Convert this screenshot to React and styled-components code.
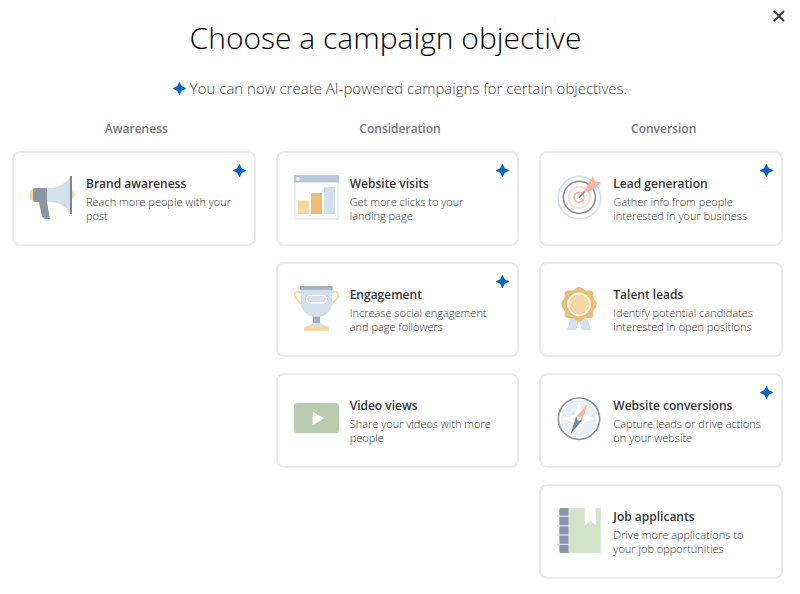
import styled, { createGlobalStyle } from "styled-components";

function Sparkle() {
  return (
    <svg width="13" height="13" viewBox="0 0 14 14" aria-hidden="true">
      <path
        d="M7 0C7.5 0 7.8 .9 8.3 2.2C9 4.2 9.8 5 11.8 5.7C13.1 6.2 14 6.5 14 7C14 7.5 13.1 7.8 11.8 8.3C9.8 9 9 9.8 8.3 11.8C7.8 13.1 7.5 14 7 14C6.5 14 6.2 13.1 5.7 11.8C5 9.8 4.2 9 2.2 8.3C.9 7.8 0 7.5 0 7C0 6.5 .9 6.2 2.2 5.7C4.2 5 5 4.2 5.7 2.2C6.2 .9 6.5 0 7 0Z"
        fill="#0a66c2"
      />
    </svg>
  );
}

function Megaphone() {
  return (
    <>
      <rect x="0" y="45" width="14" height="30" rx="4" fill="#f9d7a1" />
      <path d="M123 48a11 11 0 0 1 0 22z" fill="#f9d7a1" />
      <path d="M51 39C83 39 104 28 121 5V114C104 91 83 80 51 80z" fill="#d3dfeb" />
      <path d="M14 39H51V80L60 132H48C40 132 37 126 34 117L27 81H14Q9 81 9 76V44Q9 39 14 39z" fill="#8896a6" />
      <rect x="120" y="3" width="6" height="114" fill="#788797" />
    </>
  );
}

function BarWindow() {
  return (
    <>
      <rect width="135" height="135" rx="3" fill="#e7eef6" />
      <rect x="6" y="23" width="123" height="106" fill="#fff" />
      <path d="M3 0H132Q135 0 135 3V22H0V3Q0 0 3 0z" fill="#b9c8d8" />
      <circle cx="12" cy="12" r="6" fill="#fff" />
      <rect x="12" y="76" width="33" height="41" fill="#f9d7a1" />
      <rect x="51" y="54" width="33" height="63" fill="#edbc77" />
      <rect x="90" y="36" width="33" height="81" fill="#d3dfeb" />
    </>
  );
}

function Target() {
  return (
    <>
      <g fill="none">
        <circle cx="67" cy="68" r="64" stroke="#d3dfeb" strokeWidth="5" />
        <circle cx="67" cy="67" r="48" stroke="#8896a6" strokeWidth="5" />
        <circle cx="67" cy="67" r="32" stroke="#fddbd2" strokeWidth="6" />
        <circle cx="66" cy="67" r="15" stroke="#f8b5a3" strokeWidth="5" />
        <path d="M66 68L92 41" stroke="#788797" strokeWidth="5" />
      </g>
      <path d="M81 50L107 3L114 19L133 22L107 45L83 53z" fill="#f8b5a3" />
    </>
  );
}

function Trophy() {
  return (
    <>
      <g fill="none" stroke="#f9d7a1" strokeWidth="5">
        <path d="M23 23C16 14 2 16 2 27C2 37 13 44 20 52C26 60 27 70 34 77" />
        <path d="M112 23C119 14 133 16 133 27C133 37 122 44 115 52C109 60 108 70 101 77" />
      </g>
      <path d="M21 10H114V46C114 76 97 93 67 93C38 93 21 76 21 46z" fill="#d3dfeb" />
      <rect x="18" y="0" width="98" height="11" rx="2" fill="#a0b0c2" />
      <rect x="38" y="28" width="59" height="23" rx="11" fill="none" stroke="#fff" strokeWidth="4" />
      <path d="M57 92H78V111H57z" fill="#a0b0c2" />
      <path d="M57 111H78L94 119V122H41V119z" fill="#d3dfeb" />
      <path d="M36 121H99Q105 121 105 127V135H30V127Q30 121 36 121z" fill="#f9d7a1" />
    </>
  );
}

function Ribbon() {
  return (
    <>
      <path d="M42 94H68L58 132H30z" fill="#d3dfeb" />
      <path d="M90 94H64L74 132H102z" fill="#d3dfeb" />
      <path
        d="M66 3C75 3 77 10 84 13C92 16 99 10 106 16C112 22 107 30 110 37C112 43 119 46 119 55C119 64 112 67 110 73C107 80 112 88 106 94C99 100 92 94 84 97C77 100 75 108 66 108C57 108 55 100 48 97C40 94 33 100 26 94C20 88 25 80 22 73C20 67 13 64 13 55C13 46 20 43 22 37C25 30 20 22 26 16C33 10 40 16 48 13C55 10 57 3 66 3z"
        fill="#edbc77"
      />
      <circle cx="66" cy="55" r="33" fill="#f9d7a1" stroke="#fff" strokeWidth="5" />
    </>
  );
}

function Video() {
  return (
    <>
      <rect x="0" y="18" width="135" height="91" rx="11" fill="#b9ccae" />
      <path d="M56 44L91 64L56 84z" fill="#fff" />
    </>
  );
}

function Compass() {
  return (
    <>
      <circle cx="66" cy="65" r="62" fill="#fff" stroke="#8896a6" strokeWidth="5" />
      <circle cx="66" cy="65" r="54" fill="#e7eef6" />
      <path d="M66 16L79 53L115 65L79 78L66 114L53 78L17 65L53 53z" fill="#fff" />
      <path d="M92 21L57 59L75 70z" fill="#f8b5a3" />
      <path d="M41 110L57 60L75 71z" fill="#788797" />
      <circle cx="66" cy="65" r="6" fill="#fff" />
    </>
  );
}

function Notebook() {
  return (
    <>
      <path d="M10 0H35V135H10Q7 132 7 129V6Q7 2 10 0z" fill="#8896a6" />
      <path d="M35 0H131V135H35z" fill="#d1e4c9" />
      <path d="M83 0H116V51L100 39L83 51z" fill="#fff" />
      {[25, 53, 81, 109].map((y) => (
        <rect key={y} x="1" y={y - 2} width="34" height="4" fill="#d3dfeb" />
      ))}
    </>
  );
}

const columns = [
  {
    name: "Awareness",
    items: [
      { title: "Brand awareness", text: "Reach more people with your post", art: Megaphone, ai: true },
    ],
  },
  {
    name: "Consideration",
    items: [
      { title: "Website visits", text: "Get more clicks to your landing page", art: BarWindow, ai: true },
      { title: "Engagement", text: "Increase social engagement and page followers", art: Trophy, ai: true },
      { title: "Video views", text: "Share your videos with more people", art: Video },
    ],
  },
  {
    name: "Conversion",
    items: [
      { title: "Lead generation", text: "Gather info from people interested in your business", art: Target, ai: true },
      { title: "Talent leads", text: "Identify potential candidates interested in open positions", art: Ribbon },
      { title: "Website conversions", text: "Capture leads or drive actions on your website", art: Compass, ai: true },
      { title: "Job applicants", text: "Drive more applications to your job opportunities", art: Notebook },
    ],
  },
];

function ObjectiveCard({ item }) {
  const Art = item.art;
  return (
    <Card type="button">
      <Icon viewBox="0 0 135 135" aria-hidden="true">
        <Art />
      </Icon>
      <CardBody>
        <CardTitle>{item.title}</CardTitle>
        <CardText>{item.text}</CardText>
      </CardBody>
      {item.ai && (
        <Badge>
          <Sparkle />
        </Badge>
      )}
    </Card>
  );
}

export default function App() {
  return (
    <>
      <GlobalStyle />
      <Page>
        <TopBar>
          <CloseButton type="button" aria-label="Close">
            <svg width="12" height="12" viewBox="0 0 12 12" aria-hidden="true">
              <path d="M1 1L11 11M11 1L1 11" stroke="#404040" strokeWidth="2" />
            </svg>
          </CloseButton>
        </TopBar>
        <Title>Choose a campaign objective</Title>
        <Notice>
          <Sparkle />
          You can now create AI-powered campaigns for certain objectives.
        </Notice>
        <Columns>
          {columns.map((column) => (
            <Column key={column.name}>
              <ColumnTitle>{column.name}</ColumnTitle>
              {column.items.map((item) => (
                <ObjectiveCard key={item.title} item={item} />
              ))}
            </Column>
          ))}
        </Columns>
      </Page>
    </>
  );
}

const GlobalStyle = createGlobalStyle`
  * {
    box-sizing: border-box;
  }
  body {
    margin: 0;
    background: #fff;
    font-family: "Open Sans", "Noto Sans", sans-serif;
    font-weight: 300;
  }
`;

const Page = styled.main`
  padding: 6px 17px 15px 12px;
`;

const TopBar = styled.div`
  display: flex;
  justify-content: flex-end;
  height: 12px;
  margin-right: -6px;
`;

const CloseButton = styled.button`
  display: flex;
  align-items: center;
  justify-content: center;
  width: 20px;
  height: 20px;
  padding: 0;
  border: none;
  background: none;
  cursor: pointer;
`;

const Title = styled.h1`
  margin: 0 0 20px;
  padding-right: 24px;
  color: #000;
  font-size: 30px;
  font-weight: 300;
  line-height: 40px;
  text-align: center;
`;

const Notice = styled.p`
  display: flex;
  align-items: center;
  justify-content: center;
  gap: 4px;
  margin: 0 0 23px;
  padding-left: 5px;
  color: #444;
  font-size: 15px;
  line-height: 20px;
`;

const Columns = styled.div`
  display: grid;
  grid-template-columns: repeat(3, minmax(0, 1fr));
  gap: 20px;
`;

const Column = styled.section`
  display: flex;
  flex-direction: column;
  gap: 16px;
`;

const ColumnTitle = styled.h2`
  margin: 0 0 -2px;
  padding-left: 5px;
  color: #777;
  font-size: 12px;
  font-weight: 600;
  line-height: 16px;
  text-align: center;
`;

const Card = styled.button`
  position: relative;
  display: flex;
  align-items: flex-start;
  gap: 11px;
  min-height: 95px;
  padding: 22px 16px 20px;
  border: 2px solid #ebebeb;
  border-radius: 8px;
  background: #fff;
  font: inherit;
  text-align: left;
  cursor: pointer;

  &:hover {
    border-color: #b9c8d8;
  }
`;

const Icon = styled.svg`
  flex: none;
  width: 45px;
  height: 45px;
`;

const CardBody = styled.span`
  flex: 1;
  min-width: 0;
`;

const CardTitle = styled.span`
  display: block;
  margin-bottom: 2px;
  color: #333;
  font-size: 12px;
  font-weight: 600;
  line-height: 18px;
`;

const CardText = styled.span`
  display: block;
  color: #333;
  font-size: 11px;
  line-height: 14px;
`;

const Badge = styled.span`
  position: absolute;
  top: 11px;
  right: 8px;
  display: flex;
`;
